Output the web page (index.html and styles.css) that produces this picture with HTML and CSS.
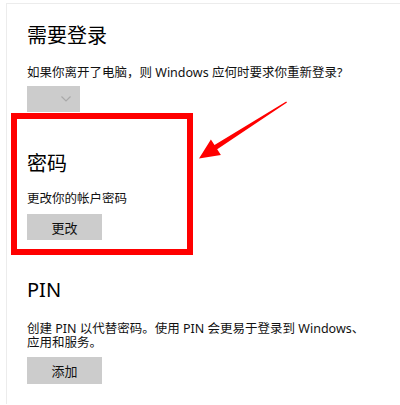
FILE: index.html
```html
<!DOCTYPE html>
<html lang="zh-CN">
<head>
<meta charset="utf-8">
<title>登录选项</title>
<link rel="stylesheet" href="styles.css">
</head>
<body>
<div class="panel">
  <h2 class="title">需要登录</h2>
  <p class="desc">如果你离开了电脑，则 Windows 应何时要求你重新登录?</p>
  <div class="dropdown">
    <svg class="chev" width="10" height="6" viewBox="0 0 10 6"><path d="M0.5 0.5 L5 5 L9.5 0.5" fill="none" stroke="#a9a9a9" stroke-width="1.2"/></svg>
  </div>

  <h2 class="title t-pass">密码</h2>
  <p class="desc d-pass">更改你的帐户密码</p>
  <button class="btn b-pass">更改</button>

  <h2 class="title t-pin">PIN</h2>
  <p class="desc d-pin">创建 PIN 以代替密码。使用 PIN 会更易于登录到 Windows、应用和服务。</p>
  <button class="btn b-pin">添加</button>
</div>

<div class="highlight"></div>
<svg class="arrow" width="400" height="405" viewBox="0 0 400 405">
  <polygon points="286.2,101.4 214.5,145.1 210.9,139.6 199,158.5 220.9,155 217.2,149.3 287,102.6" fill="#ff0000"/>
</svg>
</body>
</html>
```

FILE: styles.css
```css
html, body {
  margin: 0;
  padding: 0;
  background: #ffffff;
}

body {
  width: 400px;
  height: 405px;
  overflow: hidden;
  position: relative;
  font-family: "Noto Sans", "Noto Sans CJK SC", sans-serif;
  color: #111111;
}

.panel {
  margin: 3px 0 0 6px;
  border-top: 1px solid #ececec;
  border-left: 1px solid #ececec;
  padding-left: 20px;
  height: 401px;
  box-sizing: border-box;
  display: flex;
  flex-direction: column;
  align-items: flex-start;
}

.title {
  margin: 18px 0 0 0;
  font-size: 20px;
  line-height: 28px;
  font-weight: normal;
  color: #000000;
}

.desc {
  margin: 14px 0 0 0;
  font-size: 12.5px;
  line-height: 18px;
  color: #111111;
}

.dropdown {
  margin-top: 4px;
  width: 53px;
  height: 26px;
  background: #cccccc;
  display: flex;
  align-items: center;
  justify-content: flex-end;
  padding-right: 9px;
  box-sizing: border-box;
}

.chev {
  display: block;
}

.t-pass {
  margin-top: 38px;
}

.d-pass {
  margin-top: 12px;
}

.btn {
  margin-top: 6px;
  width: 75px;
  height: 26px;
  border: none;
  background: #cccccc;
  font-family: "Noto Sans", "Noto Sans CJK SC", sans-serif;
  font-size: 13px;
  color: #111111;
  padding: 0;
}

.t-pin {
  margin-top: 36px;
}

.d-pin {
  margin-top: 18px;
  line-height: 14px;
  width: 342px;
}

.b-pin {
  margin-top: 7px;
  height: 27px;
}

.highlight {
  position: absolute;
  left: 11px;
  top: 113px;
  width: 182px;
  height: 142px;
  border: 6px solid #ff0000;
  box-sizing: border-box;
}

.arrow {
  position: absolute;
  left: 0;
  top: 0;
}
```
